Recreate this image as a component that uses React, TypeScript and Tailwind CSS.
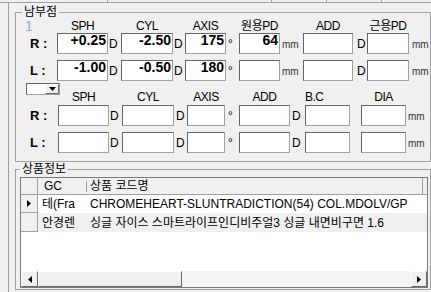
import React from "react";

type Col = { w: string; u: string; unit: string; head: string; hc?: string };

// first block (far / near PD)
const TOP: Col[] = [
  { w: "w-[51px]", u: "w-[13px] pl-[1px]", unit: "D", head: "SPH" },
  { w: "w-[52px]", u: "w-[12px] pl-[1px]", unit: "D", head: "CYL" },
  { w: "w-[41px]", u: "w-[13px] pl-[2px]", unit: "°", head: "AXIS" },
  { w: "w-[41px]", u: "w-[23px] pl-[2px]", unit: "mm", head: "원용PD" },
  { w: "w-[50px]", u: "w-[14px] pl-[4px]", unit: "D", head: "ADD" },
  { w: "w-[42px]", u: "w-[20px] pl-[3px]", unit: "mm", head: "근용PD" },
];

// second block (contact lens)
const BOTTOM: Col[] = [
  { w: "w-[51px]", u: "w-[13px] pl-[1px]", unit: "D", head: "SPH" },
  { w: "w-[52px]", u: "w-[13px] pl-[2px]", unit: "D", head: "CYL" },
  { w: "w-[38px]", u: "w-[14px] pl-[3px]", unit: "°", head: "AXIS" },
  { w: "w-[51px]", u: "w-[15px] pl-[2px]", unit: "D", head: "ADD" },
  { w: "w-[45px]", u: "w-[11px]", unit: "", head: "B.C", hc: "justify-start" },
  { w: "w-[45px]", u: "w-[20px] pl-[2px]", unit: "mm", head: "DIA" },
];

function Unit({ cls, text }: { cls: string; text: string }) {
  const size = text === "mm" ? "text-[10px] text-[#333]" : "text-[12px]";
  return (
    <div className={`${cls} flex items-center leading-[12px] ${size}`}>
      <span className={text === "mm" ? "mt-[2px]" : ""}>{text}</span>
    </div>
  );
}

function Field({ w, value }: { w: string; value?: string }) {
  return (
    <div
      className={`${w} h-[21px] bg-white border border-[#a0a0a0] border-t-[#646464] border-l-[#646464] text-right pr-[1px] text-[14px] font-bold leading-[12px]`}
    >
      {value}
    </div>
  );
}

function HeadRow({ cols, lead, className }: { cols: Col[]; lead: React.ReactNode; className: string }) {
  return (
    <div className={`flex ${className}`}>
      {lead}
      {cols.map((c) => (
        <React.Fragment key={c.head}>
          <div className={`${c.w} flex ${c.hc ?? "justify-center"} whitespace-nowrap tracking-[-0.5px]`}>
            {c.head}
          </div>
          <div className={c.u} />
        </React.Fragment>
      ))}
    </div>
  );
}

function InputRow({
  cols,
  label,
  lead,
  values,
  className = "",
}: {
  cols: Col[];
  label: string;
  lead: string;
  values: string[];
  className?: string;
}) {
  return (
    <div className={`flex h-[21px] ${className}`}>
      <div className={`${lead} flex items-center pl-[14px] text-[13px] font-bold`}>{label} :</div>
      {cols.map((c, i) => (
        <React.Fragment key={c.head}>
          <Field w={c.w} value={values[i]} />
          <Unit cls={c.u} text={c.unit} />
        </React.Fragment>
      ))}
    </div>
  );
}

function Combo() {
  return (
    <div className="mt-[2px] ml-[10px] flex w-[34px] h-[12px] bg-white border border-[#a0a0a0] border-t-[#646464] border-l-[#646464]">
      <div className="flex-1" />
      <div className="w-[14px] h-full flex items-center justify-center bg-[#f0f0f0] border border-t-white border-l-white border-r-[#696969] border-b-[#696969]">
        <svg width="7" height="4" viewBox="0 0 7 4">
          <polygon points="0,0 7,0 3.5,4" fill="#000" />
        </svg>
      </div>
    </div>
  );
}

function Arrow({ dir }: { dir: "left" | "right" }) {
  return (
    <svg width="4" height="7" viewBox="0 0 4 7" className="block">
      <polygon points={dir === "left" ? "4,0 4,7 0,3.5" : "0,0 0,7 4,3.5"} fill="#000" />
    </svg>
  );
}

function ScrollButton({ w, children }: { w: string; children?: React.ReactNode }) {
  return (
    <div
      className={`${w} h-[16px] shrink-0 flex items-center justify-center bg-[#f0f0f0] border border-t-[#ffffff] border-l-[#ffffff] border-r-[#696969] border-b-[#696969]`}
    >
      {children}
    </div>
  );
}

function Grid() {
  return (
    <div className="mt-[2px] ml-[4px] w-[408px] h-[111px] border border-[#7a7a7a] bg-white text-[12px] flex flex-col">
      {/* header */}
      <div className="flex h-[17px] shrink-0 bg-[#f0f0f0] border-b border-[#a0a0a0]">
        <div className="w-[17px] border-r border-[#a0a0a0]" />
        <div className="w-[48px] flex items-center pl-[6px]">GC</div>
        <div className="w-[337px] flex items-center border-r border-[#a0a0a0]">
          <div className="w-px h-[11px] bg-[#a0a0a0]" />
          <span className="pl-[3px]">상품 코드명</span>
        </div>
      </div>
      {/* rows */}
      <div className="flex h-[18px] shrink-0">
        <div className="w-[17px] flex items-center pl-[6px] bg-[#f0f0f0] border-r border-b border-[#a0a0a0]">
          <Arrow dir="right" />
        </div>
        <div className="w-[48px] flex items-center pl-[4px] whitespace-nowrap overflow-hidden">테(Fra</div>
        <div className="flex-1 flex items-center pl-[4px] whitespace-nowrap overflow-hidden">
          CHROMEHEART-SLUNTRADICTION(54) COL.MDOLV/GP
        </div>
      </div>
      <div className="flex h-[19px] shrink-0 bg-[#f0f0f0]">
        <div className="w-[17px] border-r border-b border-[#a0a0a0]" />
        <div className="w-[48px] flex items-center pl-[4px] whitespace-nowrap overflow-hidden">안경렌</div>
        <div className="flex-1 flex items-center pl-[4px] whitespace-nowrap overflow-hidden">
          싱글 자이스 스마트라이프인디비주얼3 싱글 내면비구면 1.6
        </div>
      </div>
      <div className="flex-1" />
      {/* horizontal scrollbar */}
      <div className="flex h-[16px] shrink-0 bg-[#f4f4f4]">
        <ScrollButton w="w-[17px]">
          <Arrow dir="left" />
        </ScrollButton>
        <ScrollButton w="w-[144px]" />
        <div className="flex-1" />
        <ScrollButton w="w-[16px]">
          <Arrow dir="right" />
        </ScrollButton>
      </div>
    </div>
  );
}

export default function App() {
  return (
    <div className="w-[431px] h-[292px] overflow-hidden bg-[#f0f0f0] text-black text-[12px] leading-none font-['Liberation_Sans','Noto_Sans_CJK_KR',sans-serif]">
      {/* bottom edge of the controls above */}
      <div className="flex h-[3px] border-b border-[#a0a0a0]">
        <div className="w-[108px] border-r border-[#a0a0a0]" />
        <div className="w-[164px] border-r border-[#a0a0a0]" />
        <div className="w-[55px] border-r border-[#a0a0a0]" />
        <div className="w-[55px] border-r border-[#a0a0a0]" />
      </div>

      <div className="flex h-[289px]">
        <div className="w-[8px] shrink-0" />
        <div className="flex-1 border-l border-[#a0a0a0] pl-[6px]">
          {/* 남부점 group box */}
          <div className="mt-[9px] w-[416px] border border-[#a0a0a0] pb-[8px]">
            <div className="-mt-[8px] ml-[6px] w-fit px-[2px] h-[14px] flex items-center bg-[#f0f0f0] leading-[12px]">
              남부점
            </div>

            <HeadRow
              cols={TOP}
              className="h-[14px] leading-[14px]"
              lead={<div className="w-[41px] pl-[9px] text-[14px] text-[#8fb3d9]">1</div>}
            />
            <InputRow cols={TOP} label="R" lead="w-[41px]" values={["+0.25", "-2.50", "175", "64", "", ""]} />
            <InputRow
              cols={TOP}
              label="L"
              lead="w-[41px]"
              values={["-1.00", "-0.50", "180", "", "", ""]}
              className="mt-[6px]"
            />

            <div className="flex h-[24px]">
              <div className="w-[42px]">
                <Combo />
              </div>
              <HeadRow cols={BOTTOM} className="self-end pb-[2px] leading-[12px]" lead={null} />
            </div>
            <InputRow cols={BOTTOM} label="R" lead="w-[42px]" values={[]} />
            <InputRow cols={BOTTOM} label="L" lead="w-[42px]" values={[]} className="mt-[6px]" />
          </div>

          {/* 상품정보 group box */}
          <div className="mt-[7px] w-[416px] border border-[#a0a0a0] pb-[1px]">
            <div className="-mt-[7px] ml-[4px] w-fit px-[2px] h-[12px] flex items-center bg-[#f0f0f0] leading-[12px]">
              상품정보
            </div>
            <Grid />
          </div>
        </div>
      </div>
    </div>
  );
}
